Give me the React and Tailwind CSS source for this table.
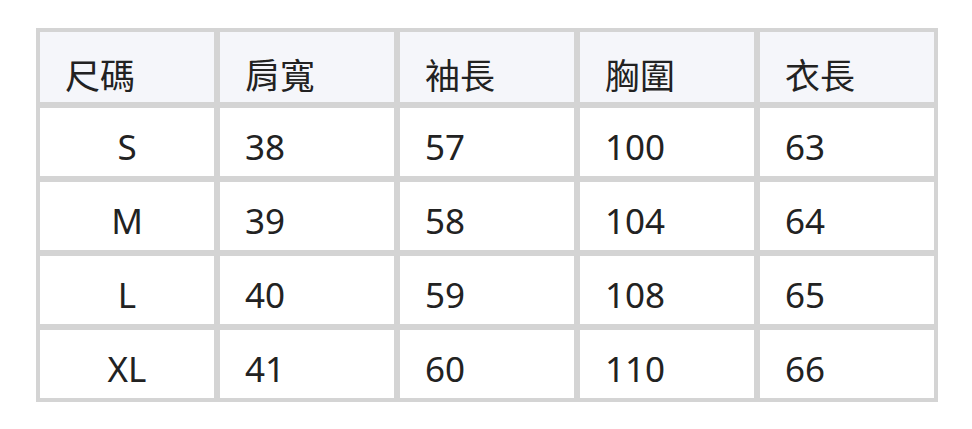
const HEAD = ['尺碼', '肩寬', '袖長', '胸圍', '衣長']

const ROWS = [
  ['S', '38', '57', '100', '63'],
  ['M', '39', '58', '104', '64'],
  ['L', '40', '59', '108', '65'],
  ['XL', '41', '60', '110', '66'],
]

export default function App() {
  return (
    <div
      className="min-h-screen bg-white pt-7 pl-9 text-[#222]"
      style={{ fontFamily: '"Noto Sans", "Noto Sans CJK TC", sans-serif' }}
    >
      <div className="grid w-[902px] grid-cols-5 gap-[6px] bg-[#d4d4d4] p-1">
        {HEAD.map((h) => (
          <div key={h} className="h-[70px] bg-[#f5f6fa] pl-[25px] pt-[26px] text-[35px] leading-none">
            {h}
          </div>
        ))}
        {ROWS.map((row) =>
          row.map((cell, i) => (
            <div
              key={row[0] + i}
              className={`h-[68px] bg-white pt-[21px] text-[35px] leading-none ${i === 0 ? 'text-center' : 'pl-[25px]'}`}
            >
              {cell}
            </div>
          )),
        )}
      </div>
    </div>
  )
}
